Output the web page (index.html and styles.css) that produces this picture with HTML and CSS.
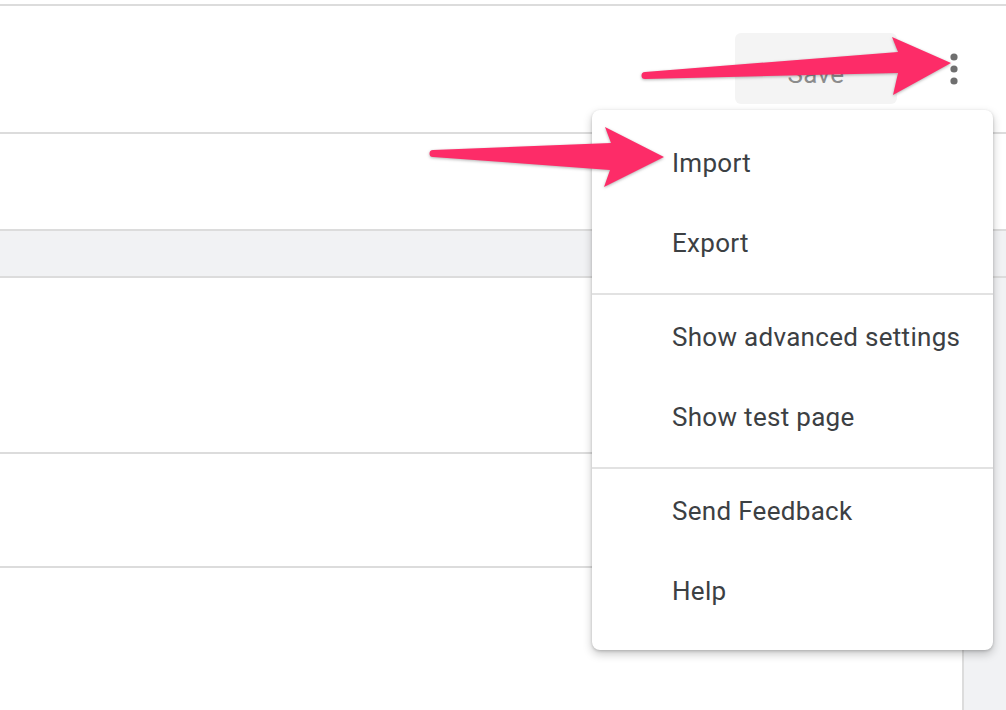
FILE: index.html
```html
<!DOCTYPE html>
<html lang="en">
<head>
<meta charset="utf-8">
<title>Menu</title>
<link rel="stylesheet" href="styles.css">
</head>
<body>
<div class="page">
  <header class="toolbar">
    <button class="save-btn">Save</button>
    <button class="more-btn" aria-label="More">
      <svg width="8" height="32" viewBox="0 0 8 32"><circle cx="4" cy="4" r="3.6"/><circle cx="4" cy="16" r="3.6"/><circle cx="4" cy="28" r="3.6"/></svg>
    </button>
  </header>
  <section class="blank"></section>
  <div class="band"></div>
  <div class="content">
    <div class="main">
      <div class="row row-a"></div>
      <div class="row row-b"></div>
      <div class="row row-c"></div>
    </div>
    <aside class="side"></aside>
  </div>

  <nav class="menu">
    <div class="menu-item">Import</div>
    <div class="menu-item">Export</div>
    <div class="menu-divider"></div>
    <div class="menu-item">Show advanced settings</div>
    <div class="menu-item">Show test page</div>
    <div class="menu-divider"></div>
    <div class="menu-item">Send Feedback</div>
    <div class="menu-item">Help</div>
  </nav>

  <svg class="arrows" width="1006" height="710" viewBox="0 0 1006 710">
    <path d="M645,72 L898,52 L892,37 L951,63 L893,95 L898,73 L645,79 A3.5,3.5 0 0 1 645,72 Z"/>
    <path d="M433,150 L611,143 L605,127 L664,157 L604,187 L610,170 L433,157 A3.5,3.5 0 0 1 433,150 Z"/>
  </svg>
</div>
</body>
</html>
```
FILE: styles.css
```css
* { box-sizing: border-box; }
html, body { margin: 0; padding: 0; background: #fff; }
body {
  font-family: Roboto, "Liberation Sans", Arial, sans-serif;
  width: 1006px;
  height: 710px;
  overflow: hidden;
}
.page {
  position: relative;
  width: 1006px;
  height: 710px;
  display: flex;
  flex-direction: column;
}
.toolbar {
  margin-top: 4px;
  height: 130px;
  border-top: 2px solid #dcdcdc;
  border-bottom: 2px solid #dcdcdc;
  display: flex;
  justify-content: flex-end;
  align-items: flex-start;
  padding: 27px 32px 0 0;
}
.save-btn {
  width: 162px;
  height: 71px;
  border: none;
  border-radius: 6px;
  background: #f4f4f4;
  color: #8c8c8c;
  font-family: inherit;
  font-size: 26px;
  letter-spacing: 0.3px;
  padding: 10px 0 0;
}
.more-btn {
  width: 40px;
  height: 71px;
  margin-left: 37px;
  border: none;
  background: transparent;
  padding: 0;
  display: flex;
  align-items: center;
  justify-content: center;
}
.more-btn svg { fill: #6f6f6f; display: block; }
.blank { height: 95px; }
.band {
  height: 49px;
  background: #f1f2f4;
  border-top: 2px solid #dcdcdc;
  border-bottom: 2px solid #dcdcdc;
}
.content {
  flex: 1;
  display: flex;
}
.main { flex: 1; display: flex; flex-direction: column; }
.row-a { height: 176px; border-bottom: 2px solid #dcdcdc; }
.row-b { height: 114px; border-bottom: 2px solid #dcdcdc; }
.row-c { flex: 1; }
.side {
  width: 44px;
  background: #f1f2f4;
  border-left: 2px solid #dcdcdc;
}
.menu {
  position: absolute;
  left: 592px;
  top: 110px;
  width: 401px;
  height: 540px;
  background: #fff;
  border-radius: 8px;
  box-shadow: 0 4px 10px rgba(0,0,0,0.22), 0 1px 3px rgba(0,0,0,0.18);
  padding: 13px 0 19px;
}
.menu-item {
  height: 80px;
  display: flex;
  align-items: center;
  padding-left: 80px;
  font-size: 26px;
  color: #3c4043;
  letter-spacing: 0.3px;
}
.menu-divider {
  height: 2px;
  background: #e2e2e2;
  margin: 10px 0 2px;
}
.arrows {
  position: absolute;
  left: 0;
  top: 0;
  pointer-events: none;
  fill: #fd2c68;
  filter: drop-shadow(0 1px 1.5px rgba(0,0,0,0.3));
}
```
